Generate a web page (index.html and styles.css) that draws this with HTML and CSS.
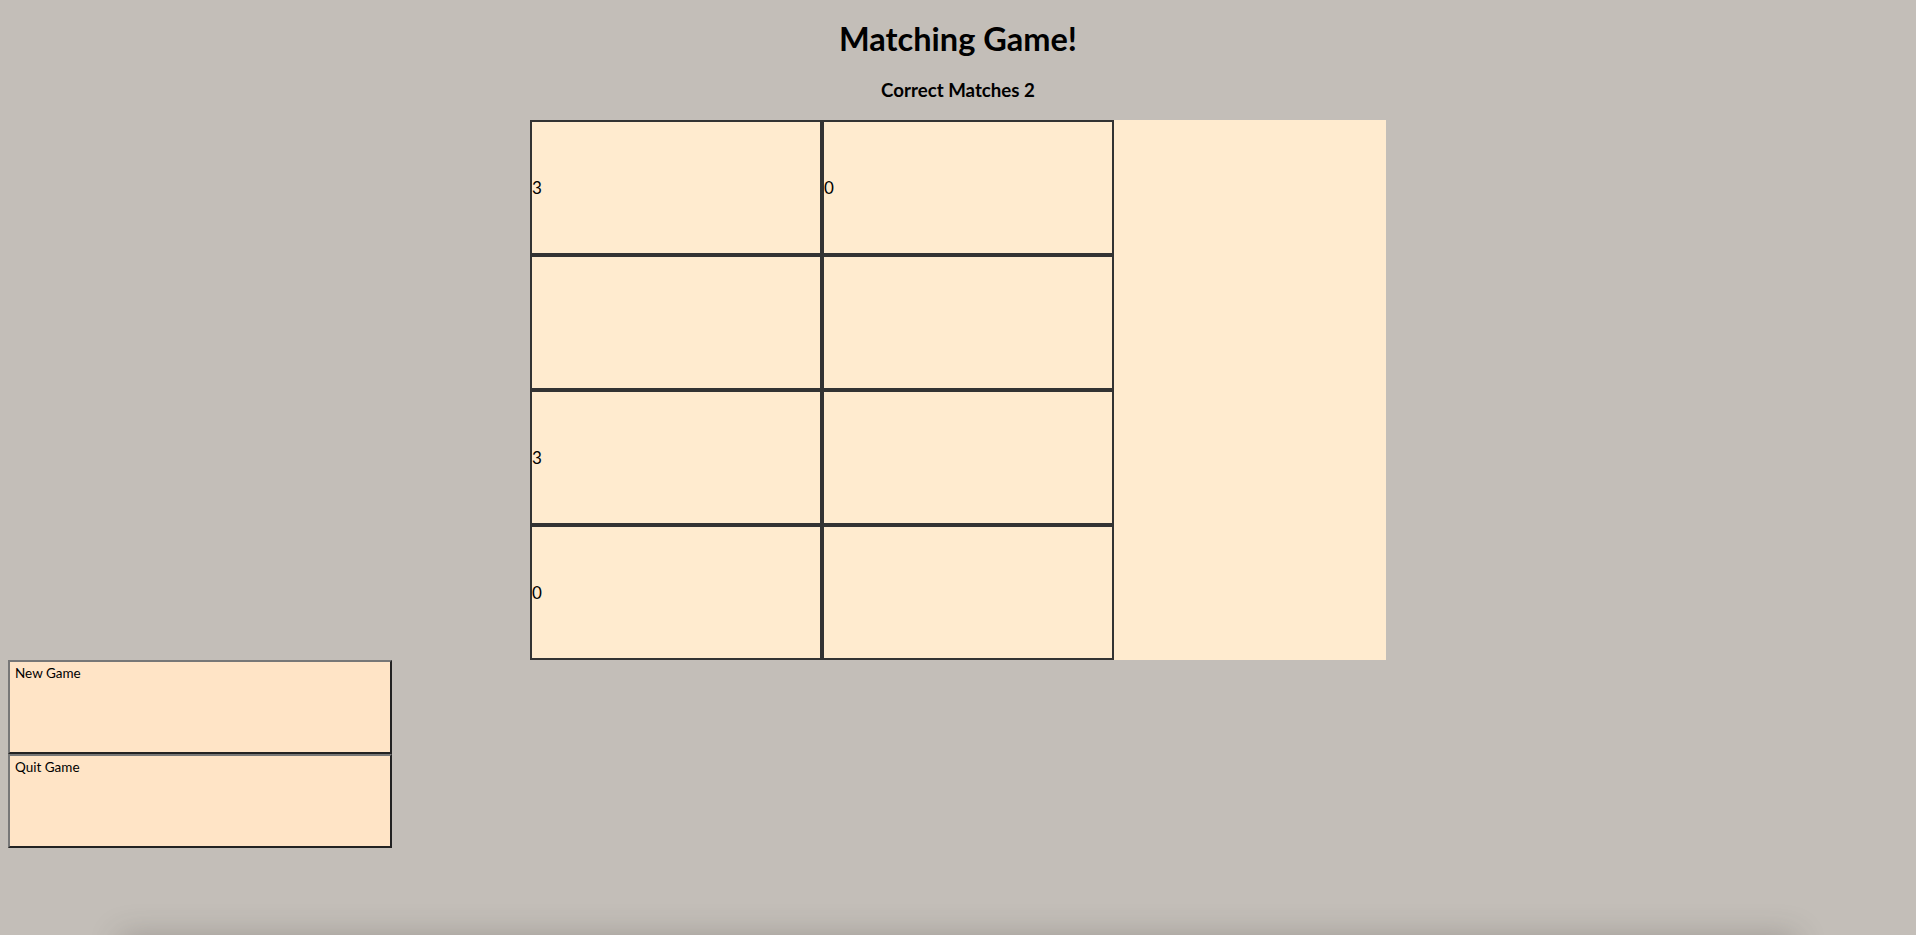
FILE: index.html
```html
<!DOCTYPE html>
<html lang="en">
<head>
<meta charset="utf-8">
<title>Matching Game</title>
<link rel="stylesheet" href="styles.css">
</head>
<body>
<h1 class="title">Matching Game!</h1>
<h3 class="score">Correct Matches 2</h3>
<div class="board">
  <div class="card">3</div>
  <div class="card">0</div>
  <div class="card"></div>
  <div class="card"></div>
  <div class="card">3</div>
  <div class="card"></div>
  <div class="card">0</div>
  <div class="card"></div>
</div>
<div class="controls">
  <button class="btn">New Game</button>
  <button class="btn">Quit Game</button>
</div>
<div class="window-shadow"></div>
</body>
</html>
```

FILE: styles.css
```css
html {
  height: 100%;
  overflow: hidden;
  background: #c3beb8;
}
body {
  margin: 0 8px;
  padding: 0;
  background: #c3beb8;
  font-family: Lato, "Open Sans", sans-serif;
  color: #000;
}
.title {
  text-align: center;
  font-size: 32.5px;
  font-weight: 700;
  margin: 20px 0 21px;
  line-height: 38px;
}
.score {
  text-align: center;
  font-size: 18.7px;
  font-weight: 700;
  margin: 20px 0 19px;
  line-height: 22px;
}
.board {
  width: 856px;
  height: 540px;
  margin: 0 auto;
  background: #ffebcf;
  display: flex;
  flex-wrap: wrap;
  align-content: flex-start;
}
.card {
  box-sizing: border-box;
  width: 292px;
  height: 135px;
  border: 2px solid #333;
  background: #ffebcf;
  display: flex;
  align-items: center;
  font-size: 17px;
  line-height: 20px;
}
.controls {
  display: flex;
  flex-direction: column;
  align-items: flex-start;
}
.btn {
  box-sizing: border-box;
  width: 384px;
  height: 94px;
  margin: 0;
  padding: 3px 5px 71px;
  text-align: left;
  font-family: Lato, "Open Sans", sans-serif;
  font-size: 13.5px;
  line-height: 16px;
  color: #000;
  background: #ffe4c6;
  border-width: 2px;
  border-style: solid;
  border-color: #777 #222 #222 #777;
}
.window-shadow {
  position: fixed;
  left: 120px;
  right: 120px;
  bottom: -40px;
  height: 40px;
  box-shadow: 0 0 30px 0 rgba(60, 55, 50, 0.25);
  pointer-events: none;
}
```
